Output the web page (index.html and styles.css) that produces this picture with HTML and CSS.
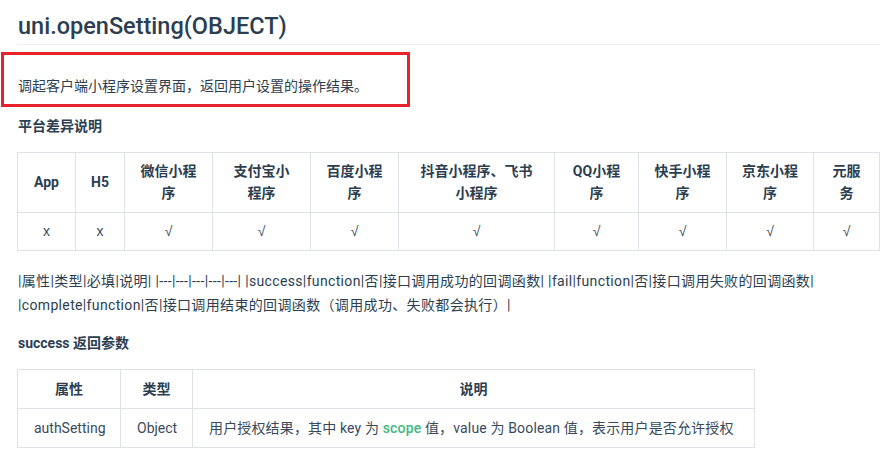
FILE: index.html
```html
<!DOCTYPE html>
<html lang="zh-CN">
<head>
    <meta charset="UTF-8">
    <meta name="viewport" content="width=device-width, initial-scale=1.0">
    <title>uni.openSetting(OBJECT)</title>
    <link rel="stylesheet" href="styles.css">
</head>
<body>
    <div class="content">
        <h2 class="api-title">uni.openSetting(OBJECT)</h2>

        <div class="highlight">
            <p>调起客户端小程序设置界面，返回用户设置的操作结果。</p>
        </div>

        <p class="label">平台差异说明</p>

        <table class="doc-table platform">
            <colgroup>
                <col><col><col><col><col><col><col><col><col><col>
            </colgroup>
            <thead>
                <tr>
                    <th>App</th><th>H5</th><th>微信小程序</th><th>支付宝小程序</th><th>百度小程序</th>
                    <th>抖音小程序、飞书小程序</th><th>QQ小程序</th><th>快手小程序</th><th>京东小程序</th><th>元服务</th>
                </tr>
            </thead>
            <tbody>
                <tr>
                    <td>x</td><td>x</td><td>√</td><td>√</td><td>√</td><td>√</td><td>√</td><td>√</td><td>√</td><td>√</td>
                </tr>
            </tbody>
        </table>

        <p class="raw">|属性|类型|必填|说明| |---|---|---|---|---| |success|function|否|接口调用成功的回调函数| |fail|function|否|接口调用失败的回调函数| |complete|function|否|接口调用结束的回调函数（调用成功、失败都会执行）|</p>

        <p class="label">success 返回参数</p>

        <table class="doc-table result">
            <colgroup>
                <col><col><col>
            </colgroup>
            <thead>
                <tr><th>属性</th><th>类型</th><th>说明</th></tr>
            </thead>
            <tbody>
                <tr>
                    <td>authSetting</td>
                    <td>Object</td>
                    <td class="desc">用户授权结果，其中 key 为 <code>scope</code> 值，value 为 Boolean 值，表示用户是否允许授权</td>
                </tr>
            </tbody>
        </table>
    </div>
</body>
</html>
```

FILE: styles.css
```css
* { margin: 0; padding: 0; box-sizing: border-box; }
body { font-family: Roboto, "Noto Sans CJK SC", sans-serif; font-size: 14px; color: #2c3e50; background: #fff; }
.content { width: 880px; padding-left: 17px; }

.api-title { font-size: 23.5px; font-weight: 500; line-height: 28px; margin-top: 12px; padding: 0 0 4px 1px; border-bottom: 1px solid #eaecef; }

.highlight { width: 409px; height: 55px; margin: 7px 0 0 -16px; padding: 19px 0 0 14px; border: 3px solid #e8212a; }
.highlight p { line-height: 24px; }

.label { font-weight: 700; line-height: 24px; margin-top: 7px; padding-left: 1px; }
.label + .doc-table { margin-top: 14px; }

.doc-table { table-layout: fixed; border-collapse: collapse; text-align: center; }
.doc-table th, .doc-table td { border: 1px solid #dfe2e5; padding: 7px 15px 8px; line-height: 22px; }
.doc-table th { font-weight: 700; }
.doc-table td { color: #3a4a5a; }

.platform { width: 862px; }
.platform td { font-family: "Liberation Sans", "Noto Sans CJK SC", sans-serif; }
.platform col:nth-child(1) { width: 58px; }
.platform col:nth-child(2) { width: 49px; }
.platform col:nth-child(3) { width: 88px; }
.platform col:nth-child(4) { width: 98px; }
.platform col:nth-child(5) { width: 88px; }
.platform col:nth-child(6) { width: 156px; }
.platform col:nth-child(7) { width: 84px; }
.platform col:nth-child(8) { width: 88px; }
.platform col:nth-child(9) { width: 87px; }
.platform col:nth-child(10) { width: 66px; }

.result { width: 737px; }
.result col:nth-child(1) { width: 103px; }
.result col:nth-child(2) { width: 72px; }
.result col:nth-child(3) { width: 562px; }
.result th, .result td { padding: 8px 16px; }
.result .desc { text-align: left; letter-spacing: 0.15px; white-space: nowrap; }
.result code { font-family: inherit; color: #42b983; font-weight: 500; }

.raw { line-height: 24px; margin-top: 18px; padding-left: 1px; letter-spacing: 0.35px; }
.raw + .label { margin-top: 14px; }
```
